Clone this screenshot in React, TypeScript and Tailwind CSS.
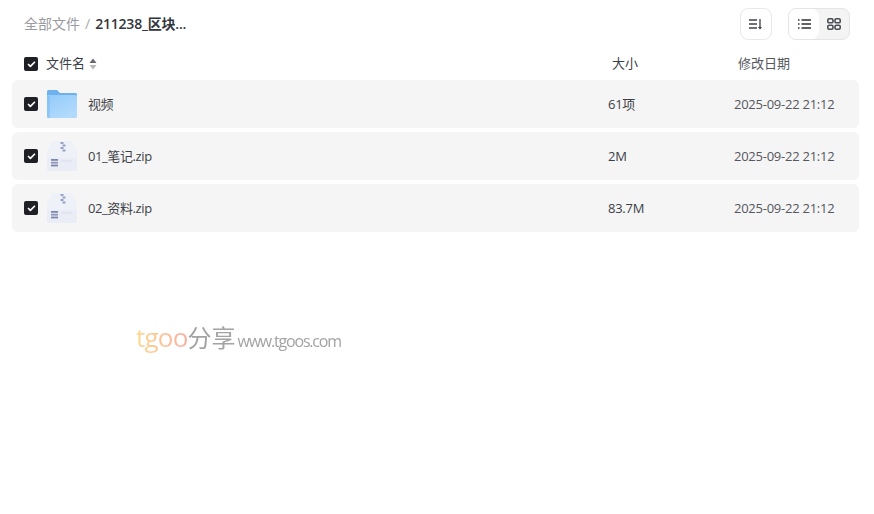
import { Check } from "lucide-react";

const rows = [
  { name: "视频", size: "61项", kind: "folder" },
  { name: "01_笔记.zip", size: "2M", kind: "zip" },
  { name: "02_资料.zip", size: "83.7M", kind: "zip" },
];

function Box() {
  return (
    <span className="flex h-[14px] w-[14px] shrink-0 items-center justify-center rounded-[2px] bg-[#1f2026]">
      <Check size={9} strokeWidth={4.5} className="text-white" />
    </span>
  );
}

function FolderIcon() {
  return (
    <svg width="30" height="30" viewBox="0 0 30 30" className="shrink-0">
      <defs>
        <linearGradient id="folder" x1="0" y1="0" x2="0.6" y2="1">
          <stop offset="0" stopColor="#93cbf9" />
          <stop offset="1" stopColor="#b2dafc" />
        </linearGradient>
      </defs>
      <path d="M0 2.5A1.5 1.5 0 0 1 1.5 1H10l3 3h15.5A1.5 1.5 0 0 1 30 5.5V10H0Z" fill="#6db2ef" />
      <path d="M0 6h28.5A1.5 1.5 0 0 1 30 7.5v20a1.5 1.5 0 0 1-1.5 1.5h-27A1.5 1.5 0 0 1 0 27.5Z" fill="url(#folder)" />
      <path d="M0 6V27.5A1.5 1.5 0 0 0 1.5 29H3V8Z" fill="#7fbdf4" opacity="0.6" />
    </svg>
  );
}

function ZipIcon() {
  return (
    <svg width="30" height="30" viewBox="0 0 30 30" className="shrink-0">
      <path d="M5 0H25L28 7A4 4 0 0 1 30 10V27a3 3 0 0 1-3 3H3a3 3 0 0 1-3-3V10A4 4 0 0 1 2 7Z" fill="#eff1f9" />
      <path d="M0 17H30V27a3 3 0 0 1-3 3H3a3 3 0 0 1-3-3Z" fill="#eaecf6" />
      <path d="M13.5 1h3v2h-3ZM15.5 3.5h3v2h-3ZM13.5 6h3v2h-3ZM15.5 8.5h3v2h-3Z" fill="#98a1c4" />
      <rect x="4" y="18" width="7" height="1.8" fill="#7e88ab" />
      <rect x="4" y="20.8" width="7" height="1.8" fill="#8f98b8" />
      <rect x="4" y="23.6" width="7" height="1.8" fill="#7e88ab" />
      <rect x="14" y="19" width="11" height="2" fill="#e2e5f1" />
    </svg>
  );
}

export default function App() {
  return (
    <div className="relative h-[514px] w-[874px] overflow-hidden bg-white text-[13px] text-[#3d3f47] [font-family:'Open_Sans','Noto_Sans_CJK_SC',sans-serif]">
      {/* top bar */}
      <div className="flex h-[48px] items-center justify-between pl-[24px] pr-[24px]">
        <div className="flex items-center pb-[2px] text-[14px]">
          <span className="text-[#9a9a9f]">全部文件</span>
          <span className="mx-[5px] text-[#a8a8ad]">/</span>
          <span className="font-semibold tracking-[-0.2px] text-[#33353c]">211238_区块...</span>
        </div>
        <div className="flex items-center gap-[16px]">
          <button className="flex h-[32px] w-[32px] items-center justify-center rounded-[8px] border border-[#e8e8ea] bg-white">
            <svg width="14" height="12" viewBox="0 0 14 12" fill="none" stroke="#3f4148" strokeWidth="1.3">
              <path d="M0 2h8M0 6h8M0 10h8M11 1v9.5" />
              <path d="M9 9l2 2.5 2-2.5" fill="#3f4148" stroke="none" />
            </svg>
          </button>
          <div className="flex h-[32px] w-[62px] overflow-hidden rounded-[8px] border border-[#e4e4e6] bg-[#f4f4f5]">
            <div className="flex w-[30px] items-center justify-center rounded-r-[8px] bg-white">
              <svg width="13" height="10" viewBox="0 0 13 10" fill="none" stroke="#2f3138" strokeWidth="1.3">
                <path d="M0 1h1.5M3.5 1H13M0 5h1.5M3.5 5H13M0 9h1.5M3.5 9H13" />
              </svg>
            </div>
            <div className="flex flex-1 items-center justify-center">
              <svg width="14" height="12" viewBox="0 0 14 12" fill="none" stroke="#4a4c53" strokeWidth="1.6">
                <rect x="0.8" y="0.8" width="5.2" height="4" rx="1.4" />
                <rect x="8" y="0.8" width="5.2" height="4" rx="1.4" />
                <rect x="0.8" y="7.2" width="5.2" height="4" rx="1.4" />
                <rect x="8" y="7.2" width="5.2" height="4" rx="1.4" />
              </svg>
            </div>
          </div>
        </div>
      </div>

      {/* column header */}
      <div className="flex h-[32px] items-center pl-[24px]">
        <Box />
        <span className="ml-[8px]">文件名</span>
        <svg width="8" height="12" viewBox="0 0 8 12" className="ml-[4px]">
          <path d="M4 0.5L7.5 5H0.5Z" fill="#66686e" />
          <path d="M4 11.5L7.5 7H0.5Z" fill="#b5b5b8" />
        </svg>
        <span className="ml-[515px] w-[126px]">大小</span>
        <span className="text-[#55575e]">修改日期</span>
      </div>

      {/* rows */}
      <div className="mx-[12px] flex w-[847px] flex-col gap-[4px]">
        {rows.map((row) => (
          <div key={row.name} className="flex h-[48px] items-center rounded-[6px] bg-[#f5f5f5] pl-[12px]">
            <Box />
            <span className="ml-[9px] mr-[11px] flex">
              {row.kind === "folder" ? <FolderIcon /> : <ZipIcon />}
            </span>
            <span className="w-[520px] pt-[2px] tracking-[-0.4px]">{row.name}</span>
            <span className="w-[126px] pt-[2px] tracking-[-0.25px]">{row.size}</span>
            <span className="pt-[2px] tracking-[-0.25px] text-[#55575e]">2025-09-22 21:12</span>
          </div>
        ))}
      </div>

      {/* watermark */}
      <div className="absolute left-[136px] top-[321px] flex items-baseline blur-[0.3px]">
        <span className="bg-gradient-to-r from-[#fbd98f] to-[#f9b0a0] bg-clip-text text-[26px] leading-[32px] tracking-[-0.8px] text-transparent">tgoo</span>
        <span className="text-[24px] leading-[32px] text-[#a3a3a3]">分享</span>
        <span className="ml-[2px] text-[16px] leading-[32px] tracking-[-1.2px] text-[#a3a3a3]">www.tgoos.com</span>
      </div>
    </div>
  );
}
